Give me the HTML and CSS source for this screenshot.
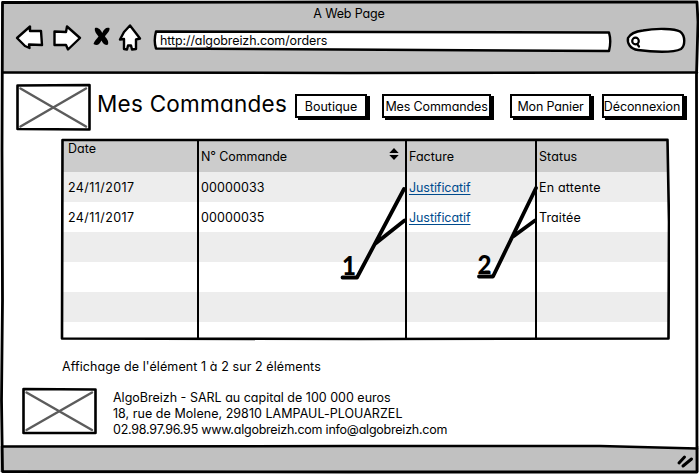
FILE: index.html
```html
<!DOCTYPE html>
<html lang="fr">
<head>
<meta charset="utf-8">
<title>Mes Commandes</title>
<link rel="stylesheet" href="styles.css">
</head>
<body>
<div class="window">
  <header class="chrome">
    <div class="window-title"><span>A Web Page</span></div>
    <div class="toolbar">
      <svg class="nav-icons" viewBox="0 0 130 34" width="130" height="34">
        <path class="ink" d="M2 17 15 5.500 15 10 26 10 27 24 14 23.500 14.500 27 10 25Z"/>
        <path class="ink" d="M39.500 10.500 51 11 52 5.500 65 17 53 28.500 51 24 39.500 24Z"/>
        <path class="cross" d="M80 7C83 6 86 9 87.200 12C89 8 91 6 94.500 7C95 11 91 13 90 15.500C92 18 94 20 93 23.500C90 25 87.500 22 86.500 19.500C84 24 82 25 78.500 23C79 20 82 18 83.500 15.500C81.500 13 79 10 80 7Z"/>
        <path class="ink" d="M115 4.500 125 17.500 121 18.500 121 28 117 28.500 116 24.500 113 24.500 112 28.500 109 28 109 18 105 18.500 109 11Z"/>
      </svg>
      <div class="address">
        <svg class="backing" viewBox="0 0 460 24"><path class="ink" d="M3 2.500 456 3.500Q458.500 12 456 22L3 19.500Q.500 12 3 2.500Z"/></svg>
        <span>http://algobreizh.com/orders</span>
      </div>
      <svg class="search" viewBox="0 0 62 28" width="62" height="28">
        <path class="ink" d="M18 3.500C31 1 50 1.500 55 4.500C61 9 60 19 56 22C48 26 27 25 13 23C5 22 2 16 3 11Q6 5 18 3.500Z"/>
        <circle class="lens" cx="10.500" cy="14" r="3.300"/><path class="lens" d="M12.500 17.500 14 19.500"/>
      </svg>
    </div>
  </header>

  <main class="page">
    <div class="masthead">
      <svg class="picture" viewBox="0 0 76 48" width="76" height="48"><path class="frame" d="M2.500 2.500 74.500 2 74.500 46.500 2.500 46Z"/><path class="diagonals" d="M5.500 5.500 71 43.500M71 5.500 5.500 43.500"/></svg>
      <h1>Mes Commandes</h1>
      <nav class="menu">
        <a class="button boutique"><span>Boutique</span></a>
        <a class="button commandes"><span>Mes Commandes</span></a>
        <a class="button panier"><span>Mon Panier</span></a>
        <a class="button deconnexion"><span>Déconnexion</span></a>
      </nav>
    </div>

    <div class="orders">
      <div class="row head">
        <div class="date"><span>Date</span></div>
        <div><span class="num-title">N° Commande</span><svg class="sort" viewBox="0 0 10 12" width="10" height="12"><path d="M5 0 9.700 5H.300ZM.300 7H9.700L5 12Z"/></svg></div>
        <div><span class="facture">Facture</span></div>
        <div><span class="status">Status</span></div>
      </div>
      <div class="row"><div><span class="day">24/11/2017</span></div><div><span class="number">00000033</span></div><div><a class="link">Justificatif</a></div><div><span class="attente">En attente</span></div></div>
      <div class="row"><div><span class="day">24/11/2017</span></div><div><span class="number">00000035</span></div><div><a class="link">Justificatif</a></div><div><span class="traitee">Traitée</span></div></div>
      <div class="row"><div></div><div></div><div></div><div></div></div>
      <div class="row"><div></div><div></div><div></div><div></div></div>
      <div class="row"><div></div><div></div><div></div><div></div></div>
      <div class="row last"><div></div><div></div><div></div><div></div></div>
      <svg class="rules" viewBox="0 0 610 206"><path d="M2.500 3 607.500 2.800 609 85 608.500 201.500 300 202 2 201.500Z"/><path class="thin" d="M138 3V202M346 3V202M476 3V202"/></svg>
    </div>

    <p class="summary"><span>Affichage de l'élément 1 à 2 sur 2 éléments</span></p>

    <div class="contact">
      <svg class="picture" viewBox="0 0 76 48" width="76" height="48"><path class="frame" d="M2.500 2 74.500 2.500 74.500 46 2.500 46Z"/><path class="diagonals" d="M5.500 5.500 71 43M71 5.500 5.500 43"/></svg>
      <address>
        <span class="company">AlgoBreizh - SARL au capital de 100 000 euros</span>
        <span class="street">18, rue de Molene, 29810 LAMPAUL-PLOUARZEL</span>
        <span class="phone">02.98.97.96.95 www.algobreizh.com info@algobreizh.com</span>
      </address>
    </div>
  </main>

  <footer class="statusbar"></footer>

  <svg class="overlay" viewBox="0 0 699 474">
    <path class="corner" d="M600 446H697V448.500Z"/>
    <path class="outline" d="M2.500 2.500 350 2 697 2 698 22 696.500 75 697 472 350 472 2.500 471.500 1.500 400 2.500 300 2 150Z"/>
    <path class="outline rule" d="M3 72.500 350 73 697 72.500M3 446.500 350 446 600 446 697 448.500"/>
    <path class="grip" d="M679 463 684.500 457M683 466 691.500 459"/>
    <g class="callouts">
      <path d="M342.500 277.500H357L404 189M375.500 243.500 404.500 220.500"/>
      <path d="M479 276.500H493L536 188M512.500 237 535 220.500"/>
      <text x="342" y="275" textLength="14" lengthAdjust="spacingAndGlyphs">1</text>
      <text x="477.500" y="274" textLength="14" lengthAdjust="spacingAndGlyphs">2</text>
    </g>
  </svg>
</div>
</body>
</html>
```
FILE: styles.css
```css
* { box-sizing: border-box; }
body {
  margin: 0;
  font: 12.5px/16px Inter, "Liberation Sans", sans-serif;
  font-feature-settings: "cv11";
  color: #000;
  background: #fff;
}
.window {
  position: relative;
  width: 699px;
  height: 474px;
  overflow: hidden;
  display: flex;
  flex-direction: column;
}
span, .link, h1 { white-space: nowrap; }
svg { flex: none; fill: none; stroke-linecap: round; stroke-linejoin: round; }
.ink { fill: #fff; stroke: #000; stroke-width: 2.4; }
.chrome { height: 71px; margin: 2px 2px 0; flex: none; background: #c1c1c1; }
.window-title { height: 23px; padding: 4px 1px 0 0; text-align: center; letter-spacing: -0.15px; }
.toolbar { display: flex; align-items: flex-start; padding-left: 13px; }
.nav-icons { margin-top: -4px; }
.address { position: relative; width: 460px; height: 24px; margin: 4px 0 0 8px; padding: 4px 0 0 7px; letter-spacing: -0.1px; }
.cross { fill: #000; }
.backing { position: absolute; inset: 0; width: 460px; height: 24px; }
.address span { position: relative; }
.search { margin: 2px 0 0 12px; }
.lens { stroke: #000; stroke-width: 2.2; }

.page { height: 373px; flex: none; }
.masthead { display: flex; height: 64px; padding: 10px 0 0 15px; }
.picture { display: block; }
.frame { fill: #fff; stroke: #000; stroke-width: 2.6; }
.diagonals { stroke: #5c5c5c; stroke-width: 2.5; }
h1 { width: 198px; margin: 8px 0 0 6px; font-size: 22.5px; line-height: 26px; font-weight: 400; letter-spacing: 0.25px; }
.menu { display: flex; padding-top: 11px; }
.button {
  display: flex;
  justify-content: center;
  height: 24px;
  padding-top: 3px;
  background: #fff;
  border: 2px solid #000;
  box-shadow: 3px 2px #000;
}
.boutique { width: 72px; margin-right: 15px; }
.commandes { width: 109px; margin-right: 19px; letter-spacing: -0.12px; }
.panier { width: 81px; margin-right: 11px; letter-spacing: -0.15px; }
.deconnexion { width: 82px; letter-spacing: -0.1px; padding-right: 2px; }

.orders { position: relative; width: 606px; height: 201px; margin: 2px 0 0 62px; }
.row { display: grid; grid-template-columns: 136px 208px 130px 132px; width: 606px; height: 30px; }
.row > div { display: flex; align-items: center; padding: 2px 0 0 3px; }
.row > div:first-child { padding-left: 6px; }
.row:nth-child(even) { background: #ededed; }
.row.head { height: 33px; background: #ccc; }
.row.last { height: 17px; background: #fff; }
.row.head > .date { align-items: flex-start; }
.num-title { letter-spacing: -0.1px; }
.day { letter-spacing: 0.42px; }
.number { letter-spacing: 0.1px; }
.attente { letter-spacing: 0.2px; }
.status, .traitee { letter-spacing: 0.1px; }
.sort { margin: -6px 7px 0 auto; fill: #000; }
.link { color: #004b8d; text-decoration: underline; text-underline-offset: 2px; letter-spacing: -0.08px; }
.rules { position: absolute; left: -2px; top: -2px; width: 610px; height: 206px; }
.rules path { stroke: #000; stroke-width: 2.6; }
.rules .thin { stroke-width: 2; }

.summary { margin: 19px 0 0 62px; height: 28px; letter-spacing: 0.09px; }
.contact { display: flex; padding-left: 21px; }
address { display: flex; flex-direction: column; margin: 3px 0 0 16px; font-style: normal; }
.street { letter-spacing: 0.04px; }
.phone { letter-spacing: -0.23px; }
.statusbar { height: 26px; flex: none; background: #c1c1c1; }

.overlay { position: absolute; inset: 0; width: 699px; height: 474px; pointer-events: none; }
.corner { fill: #fff; }
.outline { stroke: #000; stroke-width: 2.8; }
.rule { stroke-width: 2.5; }
.grip { stroke: #000; stroke-width: 3; }
.callouts path { stroke: #000; stroke-width: 3.8; }
.callouts text { fill: #000; font: 900 26px Lato, sans-serif; }
```
